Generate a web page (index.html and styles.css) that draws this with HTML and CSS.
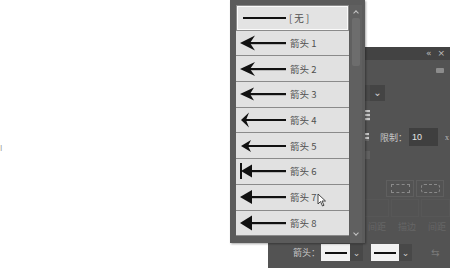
FILE: index.html
```html
<!DOCTYPE html>
<html>
<head>
<meta charset="utf-8">
<link rel="stylesheet" href="styles.css">
</head>
<body>
<div class="stage">
  <span class="mark">I</span>

  <div class="panel">
    <div class="ph">
      <span class="ph-ic">&#171;</span>
      <span class="ph-ic">&#215;</span>
    </div>
    <div class="row r-menu"><span class="menu-ic"></span></div>
    <div class="row r-select"><div class="field"><span class="chev">&#8964;</span></div></div>
    <div class="row r-icon"><span class="side-ic"></span></div>
    <div class="row r-limit">
      <span class="side-ic small"></span>
      <span class="lbl">限制：</span>
      <span class="inp">10</span>
      <span class="unit">x</span>
    </div>
    <div class="row r-faint"><span class="side-ic faint"></span></div>
    <div class="row r-btns">
      <span class="btn"><span class="dash"></span></span>
      <span class="btn"><span class="dash round"></span></span>
    </div>
    <div class="row r-boxes"><span class="fbox"></span><span class="fbox"></span><span class="fbox"></span></div>
    <div class="row r-labels"><span>间距</span><span>描边</span><span>间距</span></div>
    <div class="row r-bottom">
      <span class="blbl">箭头：</span>
      <span class="sw"><span class="swl"></span></span><span class="swc">&#8964;</span>
      <span class="sw sw2"><span class="swl"></span></span><span class="swc">&#8964;</span>
      <span class="swap">&#8646;</span>
    </div>
  </div>

  <div class="dropdown">
    <div class="list">
      <div class="item sel">
        <svg class="arr" width="46" height="16" viewBox="0 0 46 16"><rect x="3" y="7" width="43" height="2" fill="#111"/></svg>
        <span class="txt">[ 无 ]</span>
      </div>
      <div class="item">
        <svg class="arr" width="46" height="16" viewBox="0 0 46 16"><rect x="8" y="7" width="38" height="2.2" fill="#111"/><path d="M0 8 L15 0.5 L10 8 L15 15.5 Z" fill="#111"/></svg>
        <span class="txt">箭头 1</span>
      </div>
      <div class="item">
        <svg class="arr" width="46" height="16" viewBox="0 0 46 16"><rect x="8" y="7" width="38" height="2.2" fill="#111"/><path d="M0 8 L15 1 L10 8 L15 15 Z" fill="#111"/></svg>
        <span class="txt">箭头 2</span>
      </div>
      <div class="item">
        <svg class="arr" width="46" height="16" viewBox="0 0 46 16"><rect x="8" y="7" width="38" height="2.2" fill="#111"/><path d="M0 8 L14 1.5 L10 8 L14 14.5 Z" fill="#111"/></svg>
        <span class="txt">箭头 3</span>
      </div>
      <div class="item">
        <svg class="arr" width="46" height="16" viewBox="0 0 46 16"><rect x="4" y="7" width="42" height="2" fill="#111"/><path d="M1 8 L9 0.5 L6 8 L9 15.5 Z" fill="#111"/></svg>
        <span class="txt">箭头 4</span>
      </div>
      <div class="item">
        <svg class="arr" width="46" height="16" viewBox="0 0 46 16"><rect x="5" y="7" width="41" height="2" fill="#111"/><path d="M1 8 L11 2 L8 8 L11 14 Z" fill="#111"/></svg>
        <span class="txt">箭头 5</span>
      </div>
      <div class="item">
        <svg class="arr" width="46" height="16" viewBox="0 0 46 16"><rect x="8" y="7" width="38" height="2.2" fill="#111"/><rect x="0" y="0" width="2" height="16" fill="#111"/><path d="M1 8 L12 1.5 L12 14.5 Z" fill="#111"/></svg>
        <span class="txt">箭头 6</span>
      </div>
      <div class="item">
        <svg class="arr" width="46" height="16" viewBox="0 0 46 16"><rect x="8" y="7" width="38" height="2.2" fill="#111"/><path d="M0 8 L12 1 L12 15 Z" fill="#111"/></svg>
        <span class="txt">箭头 7</span>
      </div>
      <div class="item">
        <svg class="arr" width="46" height="16" viewBox="0 0 46 16"><rect x="8" y="7" width="38" height="2.2" fill="#111"/><path d="M0 8 L12 0.5 L12 15.5 Z" fill="#111"/></svg>
        <span class="txt">箭头 8</span>
      </div>
    </div>
    <div class="scroll">
      <span class="sc-up"></span>
      <span class="thumb"></span>
      <span class="sc-dn"></span>
    </div>
  </div>

  <svg class="cursor" width="10" height="14" viewBox="0 0 10 14"><path d="M1 1 L1 11 L3.5 8.5 L5.5 13 L7 12.3 L5 8 L8.5 8 Z" fill="#fff" stroke="#333" stroke-width="0.9"/></svg>
</div>
</body>
</html>
```

FILE: styles.css
```css
html, body {
  margin: 0;
  padding: 0;
  background: #fff;
}
body {
  font-family: "Noto Sans CJK SC", "Liberation Sans", sans-serif;
}
.stage {
  position: relative;
  width: 450px;
  height: 268px;
  overflow: hidden;
  background: #fff;
}
.mark {
  position: absolute;
  left: 0;
  top: 143px;
  font-size: 8px;
  color: #999;
  line-height: 10px;
}

/* ---------- background panel ---------- */
.panel {
  position: absolute;
  left: 268px;
  top: 47px;
  width: 182px;
  height: 221px;
  background: #535353;
  display: flex;
  flex-direction: column;
}
.ph {
  height: 13px;
  background: #434343;
  display: flex;
  justify-content: flex-end;
  align-items: center;
  gap: 6px;
  padding-right: 5px;
}
.ph-ic {
  color: #bdbdbd;
  font-size: 9px;
  line-height: 9px;
  font-family: "DejaVu Sans", sans-serif;
}
.row {
  display: flex;
  align-items: center;
  flex: none;
}
.r-menu { height: 20px; justify-content: flex-end; padding-right: 6px; }
.menu-ic {
  width: 8px;
  height: 5px;
  background: #8c8c8c;
  border-radius: 1px;
}
.r-select { height: 17px; margin-top: 4px; }
.field {
  margin-left: 60px;
  width: 57px;
  height: 16px;
  background: #4a4a4a;
  display: flex;
  justify-content: flex-end;
  align-items: center;
}
.chev {
  width: 15px;
  height: 16px;
  background: #444;
  color: #d0d0d0;
  font-size: 10px;
  line-height: 10px;
  display: flex;
  justify-content: center;
  align-items: center;
  font-family: "DejaVu Sans", sans-serif;
}
.r-icon { height: 12px; margin-top: 8px; }
.side-ic {
  margin-left: 97px;
  width: 5px;
  height: 11px;
  background: repeating-linear-gradient(#c8c8c8 0 2px, #6a6a6a 2px 4px);
}
.side-ic.small { height: 8px; width: 4px; }
.side-ic.faint { background: #606060; height: 8px; }
.r-limit { height: 20px; margin-top: 6px; }
.lbl {
  margin-left: 11px;
  font-size: 9px;
  color: #c8c8c8;
  width: 27px;
  white-space: nowrap;
}
.inp {
  margin-left: 2px;
  width: 29px;
  height: 18px;
  box-sizing: border-box;
  background: #3f3f3f;
  color: #e6e6e6;
  font-size: 9px;
  line-height: 18px;
  padding-left: 3px;
  font-family: "Liberation Sans", sans-serif;
}
.unit {
  margin-left: 7px;
  font-size: 8px;
  color: #bdbdbd;
  font-family: "Liberation Serif", serif;
}
.r-faint { height: 10px; margin-top: 3px; }
.r-btns { height: 18px; margin-top: 19px; gap: 2px; padding-left: 118px; }
.btn {
  width: 28px;
  height: 17px;
  box-sizing: border-box;
  border: 1px solid #5f5f5f;
  display: flex;
  align-items: center;
  justify-content: center;
}
.dash {
  width: 17px;
  height: 7px;
  border: 1px dashed #8a8a8a;
}
.dash.round { border-radius: 3px; }
.r-boxes { height: 17px; margin-top: 2px; gap: 2px; padding-left: 92px; }
.fbox {
  width: 27px;
  height: 16px;
  border: 1px solid #575757;
}
.r-labels {
  height: 14px;
  margin-top: 3px;
  padding-left: 100px;
  gap: 12px;
  font-size: 9px;
  color: #666;
}
.r-bottom { height: 17px; margin-top: 11px; }
.blbl {
  margin-left: 25px;
  width: 27px;
  font-size: 9px;
  color: #c8c8c8;
  white-space: nowrap;
}
.sw {
  margin-left: 1px;
  width: 29px;
  height: 17px;
  background: #f2f2f2;
  display: flex;
  align-items: center;
  justify-content: center;
}
.sw2 { margin-left: 8px; width: 28px; }
.swl {
  width: 22px;
  height: 2px;
  background: #111;
}
.swc {
  width: 13px;
  height: 17px;
  background: #484848;
  color: #cfcfcf;
  font-size: 9px;
  display: flex;
  align-items: center;
  justify-content: center;
  font-family: "DejaVu Sans", sans-serif;
}
.swap {
  margin-left: 19px;
  color: #7a7a7a;
  font-size: 10px;
  font-family: "DejaVu Sans", sans-serif;
}

/* ---------- dropdown ---------- */
.dropdown {
  position: absolute;
  left: 230px;
  top: 0;
  width: 135px;
  height: 243px;
  box-sizing: border-box;
  background: #5b5b5b;
  padding: 5px 3px 0 6px;
  display: flex;
  box-shadow: 1px 1px 2px rgba(0,0,0,0.35);
}
.list {
  width: 113px;
  flex: none;
}
.item {
  height: 25.7px;
  box-sizing: border-box;
  background: #e1e1e1;
  border-bottom: 1px solid #8a8a8a;
  display: flex;
  align-items: center;
}
.item.sel {
  border: 1px solid #8a8a8a;
  box-shadow: inset 0 0 0 1px #fafafa;
  background: #e3e3e3;
}
.arr {
  margin-left: 4px;
  flex: none;
}
.sel .arr { margin-left: 3px; }
.txt {
  margin-left: 4px;
  font-size: 9.5px;
  color: #505050;
  white-space: nowrap;
  font-family: "Noto Sans CJK SC", "Liberation Serif", serif;
}
.sel .txt { margin-left: 3px; }
.scroll {
  margin-left: 1px;
  width: 12px;
  height: 238px;
  background: #606060;
  position: relative;
}
.sc-up, .sc-dn {
  position: absolute;
  left: 4px;
  width: 3px;
  height: 3px;
  border-left: 1px solid #c5c5c5;
  border-top: 1px solid #c5c5c5;
}
.sc-up { top: 6px; transform: rotate(45deg); }
.sc-dn { bottom: 8px; transform: rotate(225deg); }
.thumb {
  position: absolute;
  left: 2px;
  top: 13px;
  width: 8px;
  height: 48px;
  background: #6d6d6d;
  border-radius: 2px;
}
.cursor {
  position: absolute;
  left: 317px;
  top: 193px;
}
```
